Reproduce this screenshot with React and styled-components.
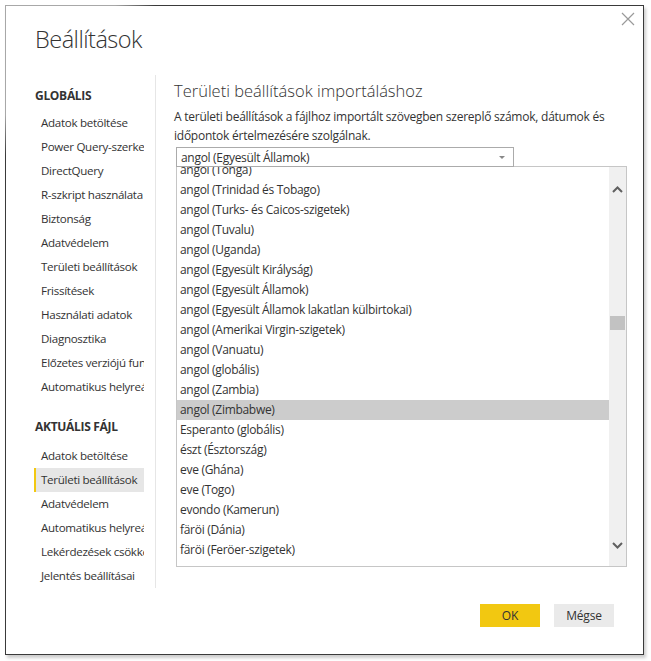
import React from "react";
import styled, { createGlobalStyle } from "styled-components";

const Global = createGlobalStyle`
  html, body { margin: 0; padding: 0; background: #fff; }
  body { font-family: "Open Sans", "Noto Sans", sans-serif; color: #333; }
  * { box-sizing: border-box; }
`;

const Page = styled.div`
  width: 651px;
  height: 661px;
  padding: 5px 0 0 5px;
`;

const Frame = styled.div`
  width: 639px;
  height: 650px;
  padding: 1px;
  background: radial-gradient(circle at 0 0, #a8a8a8 0, #a8a8a8 110px, #3a3a3a 150px);
  box-shadow: 2px 3px 3px rgba(0, 0, 0, 0.2);
`;

const Inner = styled.div`
  width: 100%;
  height: 100%;
  background: #fff;
  display: flex;
  flex-direction: column;
`;

const Header = styled.div`
  display: flex;
  justify-content: space-between;
  align-items: flex-start;
  padding: 6px 8px 0 29px;
  height: 69px;
`;

const Title = styled.h1`
  margin: 11px 0 0 0;
  font-weight: 300;
  font-size: 23.5px;
  letter-spacing: -0.5px;
  line-height: 32px;
  color: #333;
`;

const Close = styled.button`
  border: none;
  background: none;
  padding: 0;
  width: 14px;
  height: 14px;
  display: flex;
  svg { display: block; }
`;

const Body = styled.div`
  display: flex;
  height: 513px;
`;

const Nav = styled.div`
  width: 110px;
  margin-left: 28px;
  overflow: hidden;
  white-space: nowrap;
  padding-top: 13px;
`;

const SectionTitle = styled.div`
  font-size: 12px;
  font-weight: 700;
  letter-spacing: -0.3px;
  line-height: 16px;
  height: 16px;
  color: #333;
  margin-top: ${(p) => (p.$second ? "20px" : "0")};
  margin-bottom: ${(p) => (p.$second ? "9px" : "7px")};
  padding-left: 1px;
`;

const NavItem = styled.div`
  position: relative;
  height: 24px;
  line-height: 24px;
  font-size: 11.6px;
  letter-spacing: -0.3px;
  padding-left: 7px;
  color: #333;
  background: ${(p) => (p.$active ? "#e6e6e6" : "transparent")};
  &::before {
    content: "";
    position: absolute;
    left: 0;
    top: 0;
    bottom: 0;
    width: 2px;
    background: ${(p) => (p.$active ? "#f2c811" : "transparent")};
  }
`;

const Divider = styled.div`
  width: 1px;
  background: #e6e6e6;
  margin-left: 11px;
`;

const Content = styled.div`
  padding-left: 18px;
  padding-top: 5px;
  width: 472px;
`;

const Heading = styled.h2`
  margin: 0;
  font-weight: 300;
  font-size: 16.5px;
  line-height: 22px;
  color: #333;
`;

const Desc = styled.p`
  margin: 5px 0 0 0;
  font-size: 12px;
  letter-spacing: -0.24px;
  line-height: 19px;
  color: #333;
`;

const Select = styled.div`
  margin: 2px 0 0 2px;
  width: 338px;
  height: 20px;
  border: 1px solid #ababab;
  display: flex;
  align-items: center;
  justify-content: space-between;
  padding: 0 8px 0 4px;
  font-size: 12px;
  letter-spacing: -0.3px;
  color: #333;
  position: relative;
  z-index: 1;
  background: #fff;
`;

const Caret = styled.span`
  width: 0;
  height: 0;
  border-left: 3px solid transparent;
  border-right: 3px solid transparent;
  border-top: 3px solid #888;
`;

const ListBox = styled.div`
  margin: -1px 0 0 2px;
  width: 451px;
  height: 401px;
  border: 1px solid #c6c6c6;
  display: flex;
  overflow: hidden;
`;

const Rows = styled.div`
  flex: 1;
  overflow: hidden;
`;

const RowsInner = styled.div`
  margin-top: -7px;
`;

const Row = styled.div`
  height: 20px;
  line-height: 20px;
  font-size: 12px;
  letter-spacing: -0.3px;
  padding-left: 3px;
  color: #333;
  white-space: nowrap;
  background: ${(p) => (p.$sel ? "#cccccc" : "transparent")};
`;

const Scrollbar = styled.div`
  width: 17px;
  background: #f0f0f0;
  display: flex;
  flex-direction: column;
  align-items: center;
`;

const Arrow = styled.div`
  height: 40px;
  display: flex;
  align-items: center;
  justify-content: center;
  margin-top: ${(p) => p.$mt || 0};
`;

const Thumb = styled.div`
  width: 15px;
  height: 14px;
  background: #c2c2c2;
  margin-top: 107px;
`;

const Footer = styled.div`
  display: flex;
  justify-content: flex-end;
  gap: 14px;
  padding: 16px 29px 0 0;
`;

const Button = styled.button`
  width: 60px;
  height: 23px;
  border: none;
  font-family: inherit;
  font-size: 12px;
  letter-spacing: -0.2px;
  color: #333;
  background: ${(p) => (p.$primary ? "#f2c811" : "#eaeaea")};
  padding: 0;
`;

const globalItems = [
  "Adatok betöltése",
  "Power Query-szerkesztő",
  "DirectQuery",
  "R-szkript használata",
  "Biztonság",
  "Adatvédelem",
  "Területi beállítások",
  "Frissítések",
  "Használati adatok",
  "Diagnosztika",
  "Előzetes verziójú funkciók",
  "Automatikus helyreállítás",
];

const fileItems = [
  "Adatok betöltése",
  "Területi beállítások",
  "Adatvédelem",
  "Automatikus helyreállítás",
  "Lekérdezések csökkentése",
  "Jelentés beállításai",
];

const locales = [
  "angol (Tonga)",
  "angol (Trinidad és Tobago)",
  "angol (Turks- és Caicos-szigetek)",
  "angol (Tuvalu)",
  "angol (Uganda)",
  "angol (Egyesült Királyság)",
  "angol (Egyesült Államok)",
  "angol (Egyesült Államok lakatlan külbirtokai)",
  "angol (Amerikai Virgin-szigetek)",
  "angol (Vanuatu)",
  "angol (globális)",
  "angol (Zambia)",
  "angol (Zimbabwe)",
  "Esperanto (globális)",
  "észt (Észtország)",
  "eve (Ghána)",
  "eve (Togo)",
  "evondo (Kamerun)",
  "färöi (Dánia)",
  "färöi (Feröer-szigetek)",
];

const Chevron = ({ up }) => (
  <svg width="11" height="7" viewBox="0 0 11 7">
    <path
      d={up ? "M1 6 L5.5 1.5 L10 6" : "M1 1 L5.5 5.5 L10 1"}
      fill="none"
      stroke="#606060"
      strokeWidth="2"
    />
  </svg>
);

export default function App() {
  return (
    <>
      <Global />
      <Page>
        <Frame>
          <Inner>
            <Header>
              <Title>Beállítások</Title>
              <Close aria-label="Bezárás">
                <svg width="14" height="14" viewBox="0 0 14 14">
                  <path d="M1 1 L13 13 M13 1 L1 13" stroke="#9a9a9a" strokeWidth="1.2" fill="none" />
                </svg>
              </Close>
            </Header>
            <Body>
              <Nav>
                <SectionTitle>GLOBÁLIS</SectionTitle>
                {globalItems.map((t) => (
                  <NavItem key={"g" + t}>{t}</NavItem>
                ))}
                <SectionTitle $second>AKTUÁLIS FÁJL</SectionTitle>
                {fileItems.map((t) => (
                  <NavItem key={"f" + t} $active={t === "Területi beállítások"}>
                    {t}
                  </NavItem>
                ))}
              </Nav>
              <Divider />
              <Content>
                <Heading>Területi beállítások importáláshoz</Heading>
                <Desc>
                  A területi beállítások a fájlhoz importált szövegben szereplő számok, dátumok és
                  időpontok értelmezésére szolgálnak.
                </Desc>
                <Select>
                  <span>angol (Egyesült Államok)</span>
                  <Caret />
                </Select>
                <ListBox>
                  <Rows>
                    <RowsInner>
                      {locales.map((l) => (
                        <Row key={l} $sel={l === "angol (Zimbabwe)"}>
                          {l}
                        </Row>
                      ))}
                    </RowsInner>
                  </Rows>
                  <Scrollbar>
                    <Arrow $mt="2px">
                      <Chevron up />
                    </Arrow>
                    <Thumb />
                    <Arrow $mt="195px">
                      <Chevron />
                    </Arrow>
                  </Scrollbar>
                </ListBox>
              </Content>
            </Body>
            <Footer>
              <Button $primary>OK</Button>
              <Button>Mégse</Button>
            </Footer>
          </Inner>
        </Frame>
      </Page>
    </>
  );
}
